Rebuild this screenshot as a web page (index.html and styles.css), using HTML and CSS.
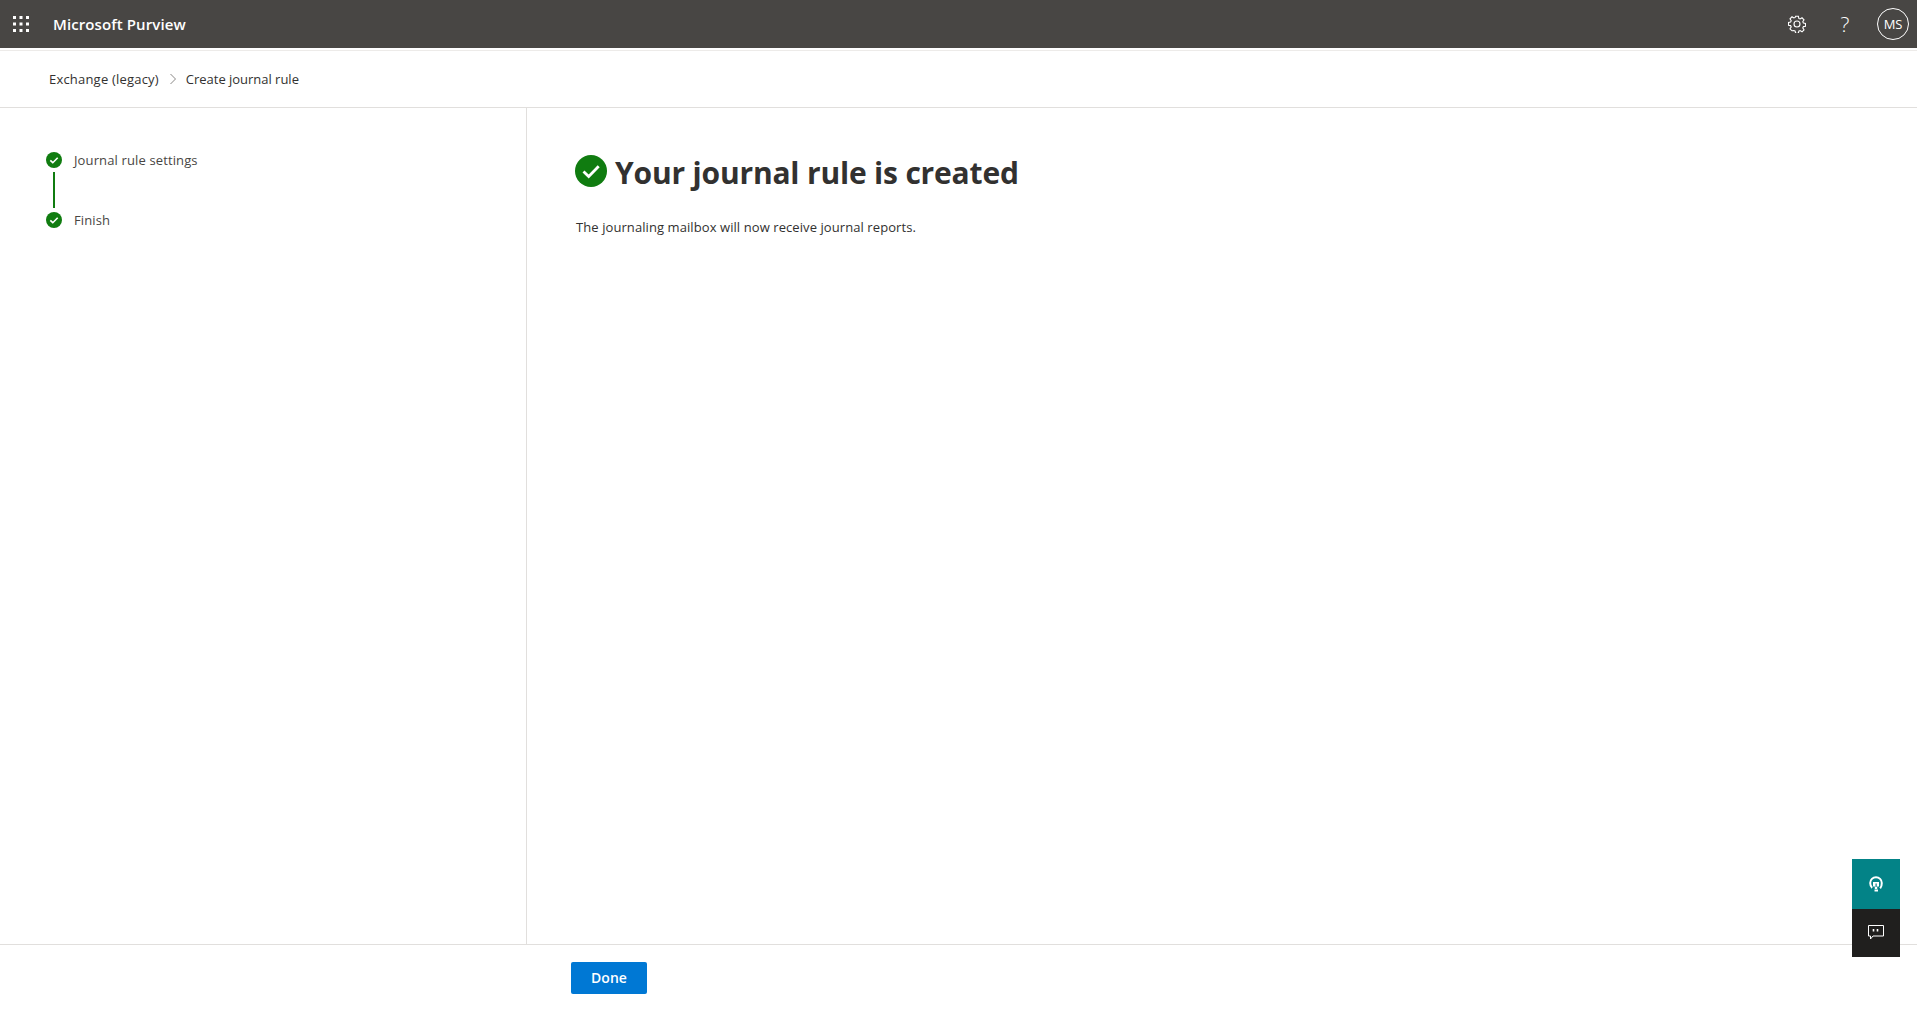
FILE: index.html
```html
<!DOCTYPE html>
<html lang="en">
<head>
<meta charset="utf-8">
<title>Create journal rule - Microsoft Purview</title>
<link rel="stylesheet" href="styles.css">
</head>
<body>
<div class="page">
  <header class="topbar">
    <button class="waffle" aria-label="App launcher">
      <svg width="16" height="16" viewBox="0 0 16 16" fill="#fff"><rect x="0" y="0" width="3" height="3"/><rect x="6.5" y="0" width="3" height="3"/><rect x="13" y="0" width="3" height="3"/><rect x="0" y="6.5" width="3" height="3"/><rect x="6.5" y="6.5" width="3" height="3"/><rect x="13" y="6.5" width="3" height="3"/><rect x="0" y="13" width="3" height="3"/><rect x="6.5" y="13" width="3" height="3"/><rect x="13" y="13" width="3" height="3"/></svg>
    </button>
    <div class="brand">Microsoft Purview</div>
    <div class="top-actions">
      <span class="top-icon">
        <svg width="18" height="18" viewBox="0 0 18 18" fill="none" stroke="#fff" stroke-width="1.1"><path d="M7.6 1.2h2.8l.4 2.2 1.3.6 1.9-1.2 2 2-1.2 1.900.6 1.300 2.100.4v2.800l-2.100.4-.6 1.300 1.200 1.900-2 2-1.900-1.200-1.300.6-.4 2.100H7.600l-.4-2.100-1.300-.6L4 15.800l-2-2 1.200-1.900-.6-1.300-2.100-.4V7.400l2.100-.4.6-1.300L2 3.800l2-2 1.900 1.200 1.300-.6z"/><circle cx="9" cy="9" r="3"/></svg>
      </span>
      <span class="top-icon help">?</span>
      <span class="avatar">MS</span>
    </div>
  </header>
  <nav class="crumbs">
    <span class="crumb-link">Exchange (legacy)</span>
    <svg class="chev" width="8" height="12" viewBox="0 0 8 12" fill="none" stroke="#8a8886"><path d="M1.500 1l5 5-5 5"/></svg>
    <span class="crumb-current">Create journal rule</span>
  </nav>
  <main class="wizard">
    <aside class="steps">
      <div class="step">
        <svg class="dot" width="16" height="16" viewBox="0 0 16 16"><circle cx="8" cy="8" r="8" fill="#107c10"/><path d="M4.300 8.300l2.500 2.400 4.900-5" fill="none" stroke="#fff" stroke-width="1.600"/></svg>
        <span>Journal rule settings</span>
      </div>
      <div class="connector"></div>
      <div class="step">
        <svg class="dot" width="16" height="16" viewBox="0 0 16 16"><circle cx="8" cy="8" r="8" fill="#107c10"/><path d="M4.300 8.300l2.500 2.400 4.900-5" fill="none" stroke="#fff" stroke-width="1.600"/></svg>
        <span>Finish</span>
      </div>
    </aside>
    <section class="content">
      <h1 class="title">
        <svg width="32" height="32" viewBox="0 0 32 32"><circle cx="16" cy="16" r="16" fill="#107c10"/><path d="M8.500 16.500l5.200 5 10-10.200" fill="none" stroke="#fff" stroke-width="2.800"/></svg>
        <span>Your journal rule is created</span>
      </h1>
      <p class="desc">The journaling mailbox will now receive journal reports.</p>
    </section>
  </main>
  <footer class="footer">
    <button class="done">Done</button>
  </footer>
  <div class="float-btns">
    <div class="fb teal">
      <svg width="14" height="16" viewBox="0 0 14 16" fill="none" stroke="#fff" stroke-width="2"><path d="M3.200 11.800C1.700 10.800 1.200 9 1.200 7a5.800 5.800 0 0 1 11.600 0c0 2.200-.4 4-1.600 5.400"/><path d="M4 6h6v4.500H8.200V13H5.800v-2.500H4z" fill="#fff" stroke="none"/><path d="M6.500 7.500h1.200v3.600H6.500z" fill="#038387" stroke="none"/><path d="M5.500 14.500h3.500" stroke-width="2"/></svg>
    </div>
    <div class="fb dark">
      <svg width="16" height="16" viewBox="0 0 16 16" fill="none" stroke="#fff"><path d="M.500 .5h15v10.500H5l-2.500 3V11H.500z"/><path d="M5.500 4v2.500M9.500 4v2.500" stroke-width="1.600"/></svg>
    </div>
  </div>
</div>
</body>
</html>
```
FILE: styles.css
```css
* { box-sizing: border-box; }
html, body { margin: 0; height: 100%; }
body { font-family: "Open Sans", "Noto Sans", sans-serif; color: #323130; background: #fff; overflow: hidden; }
.page { position: relative; height: 1009px; display: flex; flex-direction: column; }
.topbar { height: 48px; flex: none; background: #484644; color: #fff; display: flex; align-items: center; }
.waffle { width: 40px; height: 48px; padding: 0 0 0 13px; margin: 0; background: none; border: 0; display: flex; align-items: center; }
.brand { margin-left: 13px; font-size: 15px; font-weight: 600; letter-spacing: .1px; }
.top-actions { margin-left: auto; display: flex; align-items: center; padding-right: 8px; }
.top-icon { width: 48px; height: 48px; display: flex; align-items: center; justify-content: center; }
.help { font-size: 21px; font-weight: 300; }
.avatar { margin-left: 8px; width: 32px; height: 32px; border: 1px solid #fff; border-radius: 50%; display: flex; align-items: center; justify-content: center; font-size: 13px; font-weight: 400; letter-spacing: -.2px; }
.crumbs { margin-top: 2px; height: 58px; flex: none; border-top: 1px solid #edebe9; border-bottom: 1px solid #e1dfdd; display: flex; align-items: center; padding-left: 49px; font-size: 13px; }
.crumb-link { letter-spacing: .2px; }
.crumb-current { letter-spacing: -.02px; }
.chev { margin: 0 9px 0 10px; }
.wizard { flex: 1; display: flex; min-height: 0; }
.steps { width: 527px; flex: none; border-right: 1px solid #e1dfdd; padding: 44px 0 0 46px; font-size: 13px; letter-spacing: .13px; color: #484644; }
.step { display: flex; align-items: center; height: 16px; gap: 12px; }
.connector { width: 2px; height: 36px; margin: 4px 0 4px 7px; background: #107c10; }
.content { flex: 1; padding: 47px 0 0 48px; }
.title { margin: 0; display: flex; align-items: flex-start; gap: 8px; font-size: 30px; line-height: 36px; font-weight: 700; letter-spacing: -.18px; color: #323130; }
.desc { margin: 27px 0 0; font-size: 13px; line-height: 18px; letter-spacing: .08px; padding-left: 1px; }
.footer { height: 65px; flex: none; border-top: 1px solid #e1dfdd; padding: 17px 0 0 571px; }
.done { display: block; width: 76px; height: 32px; background: #0078d4; color: #fff; border: 0; border-radius: 2px; font-family: inherit; font-size: 14px; font-weight: 600; padding: 0 0 2px; }
.float-btns { position: absolute; left: 1852px; top: 859px; width: 48px; }
.fb { display: flex; align-items: center; justify-content: center; }
.teal { height: 50px; background: #038387; }
.dark { height: 48px; background: #201f1e; }
```
